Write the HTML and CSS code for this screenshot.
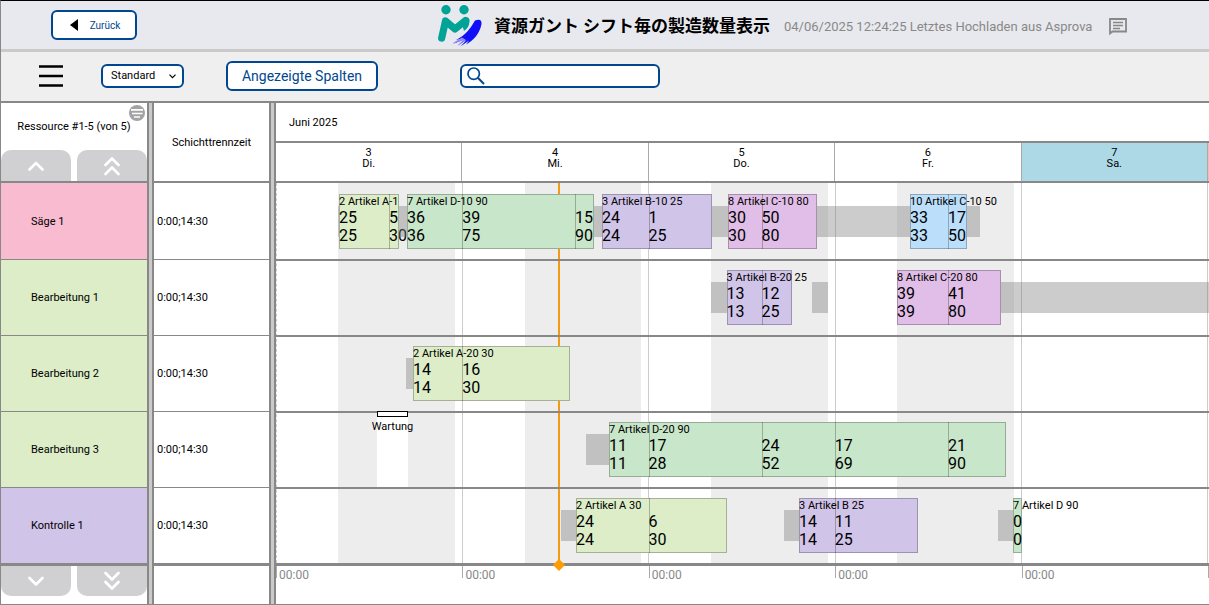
FILE: index.html
```html
<!DOCTYPE html>
<html lang="de">
<head>
<meta charset="utf-8">
<meta name="viewport" content="width=device-width, initial-scale=1">
<title>資源ガント シフト毎の製造数量表示</title>
<link rel="stylesheet" href="styles.css">
</head>
<body>
<header class="topbar">
  <button class="btn btn-back" type="button">
    <svg width="8" height="12" viewBox="0 0 8 12" aria-hidden="true"><path d="M8 0v12L0 6z" fill="#000"/></svg>
    <span>Zurück</span>
  </button>
  <div class="brand">
    <svg class="logo" width="44" height="44" viewBox="0 0 44 44" aria-hidden="true">
      <g fill="#00a396"><circle cx="8" cy="6.700" r="4.700"/><circle cx="26" cy="6.700" r="4.700"/></g>
      <path d="M3.700 35L7.500 18l9.500 8L27.500 17.500" fill="none" stroke="#00a396" stroke-width="7.200" stroke-linecap="round" stroke-linejoin="round"/>
      <path d="M26 14.500q6-1 5.500 4Q31 25 26 28l-1.500-5z" fill="#00a396"/>
      <path d="M37 17.500Q44 15 43.500 21C42 30 36 37 28 41.500l3-4-8.500 6 6-6.500-9 5.500 7.500-6.500-12 5 9-5.500-6 1.500C28 32 32 26 37 17.500z" fill="#1010f8"/>
      <path d="M24 34.500l-10 6L25 37.500l-5 5.500L28 37z" fill="#8f8cf0"/>
    </svg>
    <h1 class="title">資源ガント シフト毎の製造数量表示</h1>
    <span class="upload">04/06/2025 12:24:25 Letztes Hochladen aus Asprova</span>
    <button class="icon-btn comments" type="button" aria-label="Kommentare">
      <svg width="18" height="18" viewBox="0 0 18 18" fill="none" stroke="#888" aria-hidden="true"><path d="M1 15.500V1h16v12.500H3.500z" stroke-width="1.800"/><path d="M4 4.500h10M4 7.500h10M4 10.500h7" stroke-width="1.600"/></svg>
    </button>
  </div>
</header>

<nav class="toolbar">
  <button class="icon-btn menu" type="button" aria-label="Menü">
    <svg width="24" height="22" viewBox="0 0 24 22" aria-hidden="true"><path d="M0 1.500h24M0 11h24M0 20.500h24" stroke="#000" stroke-width="2.400"/></svg>
  </button>
  <span class="select-box">
    <select class="select" aria-label="Stil"><option>Standard</option></select>
    <svg class="caret" width="7" height="5" viewBox="0 0 7 5" aria-hidden="true"><path d="M.5.700l3 3 3-3" fill="none" stroke="#000" stroke-width="1.200"/></svg>
  </span>
  <button class="btn btn-columns" type="button">Angezeigte Spalten</button>
  <label class="search">
    <svg width="18" height="18" viewBox="0 0 18 18" fill="none" stroke="#00478f" aria-hidden="true"><circle cx="6.700" cy="6.700" r="5.700" stroke-width="1.700"/><path d="M10.800 10.800L17 17" stroke-width="2"/></svg>
    <input type="search" aria-label="Suche">
  </label>
</nav>

<main class="gantt">
  <section class="pane pane-resource">
    <div class="pane-head">
      <span class="pane-title">Ressource #1-5 (von 5)</span>
      <button class="icon-btn filter" type="button" aria-label="Filter">
        <svg width="16" height="16" viewBox="0 0 16 16" aria-hidden="true"><circle cx="8" cy="8" r="8" fill="#a3a3a3"/><path d="M2 4.800h12M3 8.500h10.500M5 12h6" stroke="#fff" stroke-width="1.700"/></svg>
      </button>
      <div class="scroll scroll-up">
        <button type="button" aria-label="Nach oben"><svg width="16" height="20" viewBox="0 0 16 20"><path d="M1.500 13.500L8 7l6.500 6.500"/></svg></button>
        <button type="button" aria-label="Zum Anfang"><svg width="16" height="20" viewBox="0 0 16 20"><path d="M1.500 9L8 2.500 14.500 9M1.500 18L8 11.500l6.500 6.500"/></svg></button>
      </div>
    </div>
    <div class="rows">
      <div class="row name rose">Säge 1</div>
      <div class="row name lime">Bearbeitung 1</div>
      <div class="row name lime">Bearbeitung 2</div>
      <div class="row name lime">Bearbeitung 3</div>
      <div class="row name violet">Kontrolle 1</div>
    </div>
    <div class="pane-foot">
      <div class="scroll scroll-down">
        <button type="button" aria-label="Nach unten"><svg width="16" height="20" viewBox="0 0 16 20"><path d="M1.500 7L8 13.500 14.500 7"/></svg></button>
        <button type="button" aria-label="Zum Ende"><svg width="16" height="20" viewBox="0 0 16 20"><path d="M1.500 2L8 8.500 14.500 2M1.500 11L8 17.500l6.500-6.500"/></svg></button>
      </div>
    </div>
  </section>

  <section class="pane pane-shift">
    <div class="pane-head"><span class="pane-title">Schichttrennzeit</span></div>
    <div class="rows">
      <div class="row value">0:00;14:30</div>
      <div class="row value">0:00;14:30</div>
      <div class="row value">0:00;14:30</div>
      <div class="row value">0:00;14:30</div>
      <div class="row value">0:00;14:30</div>
    </div>
    <div class="pane-foot"></div>
  </section>

  <section class="pane pane-chart">
    <div class="pane-head">
      <div class="month">Juni 2025</div>
      <div class="days">
        <div class="day">3<br>Di.</div>
        <div class="day">4<br>Mi.</div>
        <div class="day">5<br>Do.</div>
        <div class="day">6<br>Fr.</div>
        <div class="day saturday">7<br>Sa.</div>
        <div class="day-rest"></div>
      </div>
    </div>
    <div class="rows tracks">
      <div class="backdrop">
        <i class="work" style="--s:8;--e:23"></i>
        <i class="work" style="--s:32.1;--e:47"></i>
        <i class="work" style="--s:56;--e:71.1"></i>
        <i class="work" style="--s:80;--e:95.1"></i>
        <i class="origin"></i>
        <i class="midnight" style="--s:24"></i>
        <i class="midnight" style="--s:47.95"></i>
        <i class="midnight" style="--s:72"></i>
        <i class="midnight" style="--s:96"></i>
        <i class="midnight" style="--s:120"></i>
        <i class="now" style="--s:36.3"></i>
      </div>
      <div class="row track">
        <i class="setup" style="--s:8;--e:8.2"></i>
        <div class="op lime" style="--s:8.12;--e:15.85"><b>2 Artikel A-1</b><div class="segs"><span style="--g:6.44">25<br>25</span><span style="--g:1.29">5<br>30</span></div></div>
        <i class="setup" style="--s:15.85;--e:16.88"></i>
        <div class="op green" style="--s:16.88;--e:40.97"><b>7 Artikel D-10 90</b><div class="segs"><span style="--g:7.12">36<br>36</span><span style="--g:14.52">39<br>75</span><span style="--g:2.45">15<br>90</span></div></div>
        <i class="setup" style="--s:40.97;--e:42"></i>
        <div class="op violet" style="--s:42;--e:56.17"><b>3 Artikel B-10 25</b><div class="segs"><span style="--g:6">24<br>24</span><span style="--g:8.17">1<br>25</span></div></div>
        <i class="setup" style="--s:56.17;--e:58.23"></i>
        <div class="op orchid" style="--s:58.23;--e:69.7"><b>8 Artikel C-10 80</b><div class="segs"><span style="--g:4.32">30<br>30</span><span style="--g:7.15">50<br>80</span></div></div>
        <i class="setup" style="--s:69.7;--e:81.68"></i>
        <i class="setup" style="--s:89.02;--e:90.7"></i>
        <div class="op blue" style="--s:81.68;--e:89.02"><b>10 Artikel C-10 50</b><div class="segs"><span style="--g:4.89">33<br>33</span><span style="--g:2.45">17<br>50</span></div></div>
      </div>
      <div class="row track">
        <i class="setup" style="--s:56;--e:58.1"></i>
        <div class="op violet" style="--s:58.05;--e:66.48"><b>3 Artikel B-20 25</b><div class="segs"><span style="--g:4.5">13<br>13</span><span style="--g:3.93">12<br>25</span></div></div>
        <i class="setup" style="--s:69.05;--e:71.1"></i>
        <div class="op orchid" style="--s:80;--e:93.46"><b>8 Artikel C-20 80</b><div class="segs"><span style="--g:6.57">39<br>39</span><span style="--g:6.89">41<br>80</span></div></div>
        <i class="setup" style="--s:93.46;--e:120.2"></i>
      </div>
      <div class="row track">
        <i class="setup" style="--s:16.75;--e:17.65"></i>
        <div class="op lime" style="--s:17.65;--e:37.82"><b>2 Artikel A-20 30</b><div class="segs"><span style="--g:6.35">14<br>14</span><span style="--g:13.82">16<br>30</span></div></div>
      </div>
      <div class="row track">
        <div class="pause" style="--s:12.95;--e:17.07"><i></i><span>Wartung</span></div>
        <i class="setup" style="--s:39.94;--e:42.9"></i>
        <div class="op green" style="--s:42.9;--e:94.05"><b>7 Artikel D-20 90</b><div class="segs"><span style="--g:5.1">11<br>11</span><span style="--g:14.55">17<br>28</span><span style="--g:9.45">24<br>52</span><span style="--g:14.57">17<br>69</span><span style="--g:7.48">21<br>90</span></div></div>
      </div>
      <div class="row track">
        <i class="setup" style="--s:36.72;--e:38.65"></i>
        <div class="op lime" style="--s:38.65;--e:58.1"><b>2 Artikel A 30</b><div class="segs"><span style="--g:9.35">24<br>24</span><span style="--g:10.1">6<br>30</span></div></div>
        <i class="setup" style="--s:65.45;--e:67.38"></i>
        <div class="op violet" style="--s:67.38;--e:82.71"><b>3 Artikel B 25</b><div class="segs"><span style="--g:4.62">14<br>14</span><span style="--g:10.71">11<br>25</span></div></div>
        <i class="setup" style="--s:93.02;--e:94.95"></i>
        <div class="op green" style="--s:94.95;--e:96.11"><b>7 Artikel D 90</b><div class="segs"><span style="--g:1">0<br>0</span></div></div>
      </div>
      <svg class="now-mark" style="--s:36.3" width="12" height="12" viewBox="0 0 12 12" aria-hidden="true"><path d="M6 0l6 6-6 6-6-6z" fill="#ff9c00"/></svg>
    </div>
    <div class="pane-foot hours">
      <span class="hour">00:00</span>
      <span class="hour">00:00</span>
      <span class="hour">00:00</span>
      <span class="hour">00:00</span>
      <span class="hour">00:00</span>
      <span class="hour hour-last"></span>
    </div>
  </section>
</main>
</body>
</html>
```
FILE: styles.css
```css
:root {
  --line: #888;
  --navy: #00478f;
  --span: 120.2;
}

* { box-sizing: border-box; }

body {
  margin: 0;
  min-height: 100vh;
  display: flex;
  flex-direction: column;
  border-top: 1px solid #000;
  border-left: 1px solid var(--line);
  background: #fff;
  color: #000;
  font: 11px/12px Roboto, "Noto Sans CJK JP", sans-serif;
  overflow-x: hidden;
}

button, input, select { font: inherit; color: inherit; }

/* Header */
.topbar {
  display: flex;
  align-items: center;
  height: 51px;
  padding-left: 50px;
  background: #e8e9ee;
  border-bottom: 3px solid #cacaca;
}

.btn {
  display: flex;
  align-items: center;
  justify-content: center;
  height: 30px;
  border: 2px solid var(--navy);
  border-radius: 6px;
  background: #fff;
  color: var(--navy);
}

.btn-back { width: 86px; gap: 12px; padding: 0 0 0 2px; font-size: 10px; }
.btn-back span { padding-top: 2px; }

.icon-btn {
  display: flex;
  padding: 0;
  border: 0;
  background: none;
}

.brand { display: flex; align-items: center; margin-left: 26%; }

.logo { flex: none; }

.title {
  margin: 0 14px 0 12px;
  font: bold 17px/24px "Noto Sans CJK JP", sans-serif;
  white-space: nowrap;
}

.upload {
  margin-right: 17px;
  padding-top: 3px;
  font-size: 13px;
  line-height: 16px;
  color: #888;
  white-space: nowrap;
}

.comments { padding-top: 4px; }

/* Toolbar */
.toolbar {
  display: flex;
  align-items: center;
  height: 51px;
  padding: 0 0 2px 38px;
  background: #efefef;
  border-bottom: 2px solid var(--line);
}

.menu { margin-right: 38px; }

.select-box { position: relative; margin-right: 42px; }

.select {
  display: block;
  width: 83px;
  height: 24px;
  padding: 1px 8px 0;
  border: 2px solid var(--navy);
  border-radius: 6px;
  background: #fff;
  appearance: none;
}

.caret { position: absolute; right: 8px; top: 10px; }

.btn-columns { width: 152px; margin-right: 82px; padding: 0; font-size: 14px; }

.search {
  display: flex;
  align-items: center;
  width: 200px;
  height: 24px;
  padding: 0 5px;
  border: 2px solid var(--navy);
  border-radius: 6px;
  background: #fff;
}

.search input {
  flex: 1;
  min-width: 0;
  border: 0;
  outline: 0;
  background: none;
}

/* Gantt panes */
.gantt {
  flex: 1;
  display: grid;
  grid-template-columns: 148px 119px 1fr;
  column-gap: 3px;
  background: #cacaca;
  border-bottom: 1px solid var(--line);
}

.pane {
  display: flex;
  flex-direction: column;
  min-width: 0;
  background: #fff;
  border: 0 solid var(--line);
}

.pane-resource { border-right-width: 2px; }
.pane-shift { border-width: 0 2px; }
.pane-chart { border-left-width: 2px; }

.pane-head {
  position: relative;
  display: flex;
  flex-direction: column;
  align-items: center;
  justify-content: center;
  height: 80px;
  border-bottom: 2px solid var(--line);
}

.pane-resource .pane-head { justify-content: space-between; padding-top: 18px; }
.pane-shift .pane-head { padding-top: 2px; }
.pane-chart .pane-head { align-items: stretch; justify-content: flex-start; }

.filter { position: absolute; top: 2px; right: 2px; }

.scroll { display: flex; gap: 6px; align-self: stretch; }

.scroll button {
  flex: 1;
  display: flex;
  align-items: center;
  justify-content: center;
  height: 31px;
  padding: 0;
  border: 0;
  background: #d0cfd1;
}

.scroll-up button { border-radius: 10px 10px 0 0; }
.scroll-down button { height: 30px; border-radius: 0 0 10px 10px; }

.scroll path {
  fill: none;
  stroke: #fff;
  stroke-width: 2.6;
  stroke-linecap: round;
  stroke-linejoin: round;
}

.rows {
  display: flex;
  flex-direction: column;
  border-bottom: 3px solid var(--line);
}

.row { display: flex; align-items: center; height: 76px; padding-top: 1px; }
.row + .row { border-top: 1px solid var(--line); }
.name { padding-left: 30px; }
.value { padding-left: 3px; }

.pane-foot { flex: 1; min-height: 38px; }

.rose { background: #f8bbd0; }
.lime { background: #dcedc8; }
.violet { background: #d1c4e9; }
.green { background: #c8e6c9; }
.orchid { background: #e1bee7; }
.blue { background: #bbdefb; }

/* Time scale */
.month { height: 38px; padding: 14px 13px 12px; }

.days {
  flex: 1;
  display: flex;
  border-top: 2px solid var(--line);
}

.day {
  flex: 24 1 0;
  padding-top: 4px;
  line-height: 11px;
  text-align: center;
  border-right: 1px solid #aaa;
}

.saturday { background: #add8e6; }
.day-rest { width: 1px; background: #ffb3b3; }

.hours { display: flex; }

.hour {
  flex: 24 1 0;
  height: 12px;
  padding: 3px 0 0 2px;
  border-left: 1px solid #aaa;
  font-size: 12px;
  color: #888;
}

.hour-last { flex: 0 0 1px; padding: 0; }

/* Chart canvas: items are placed by start and end hour */
.tracks { position: relative; }

.backdrop {
  position: absolute;
  inset: 0;
  overflow: hidden;
}

.work, .midnight, .now, .setup, .op, .pause, .now-mark {
  position: absolute;
  left: calc(var(--s) / var(--span) * 100%);
}

.work, .setup, .op, .pause {
  width: calc((var(--e) - var(--s)) / var(--span) * 100%);
}

.work { top: 0; bottom: 0; background: #ededed; }
.midnight { top: 0; bottom: 0; width: 1px; background: #ccc; }
.now { top: 0; bottom: 0; width: 2px; background: #f39a12; }

.origin {
  position: absolute;
  inset: 0 auto 0 0;
  border-left: 1px dashed #ccc;
}

.now-mark { bottom: -8px; margin-left: -5px; }

.track { position: relative; }
.track + .track { border-top: 2px solid var(--line); }
.track + .track > * { margin-top: -2px; }

.setup { top: 23px; height: 31px; background: rgba(128, 128, 128, 0.4); }

.op {
  top: 11px;
  height: 55px;
  display: grid;
  box-shadow: inset 0 0 0 1px rgba(0, 0, 0, 0.25);
}

.op b {
  grid-area: 1 / 1;
  z-index: 1;
  min-width: 0;
  height: 15px;
  padding-top: 2px;
  font-weight: normal;
  white-space: nowrap;
}

.segs {
  grid-area: 1 / 1;
  display: flex;
  min-width: 0;
}

.segs span {
  flex: var(--g) 1 0;
  min-width: 0;
  padding-top: 15px;
  font-size: 16px;
  line-height: 18px;
}

.segs span + span { box-shadow: inset 1px 0 rgba(0, 0, 0, 0.25); }

.pause {
  top: 0;
  bottom: 0;
  display: flex;
  flex-direction: column;
  align-items: center;
  gap: 4px;
  background: #fff;
}

.pause i {
  align-self: stretch;
  height: 6px;
  border: 1px solid #000;
  background: #fff;
}
```
